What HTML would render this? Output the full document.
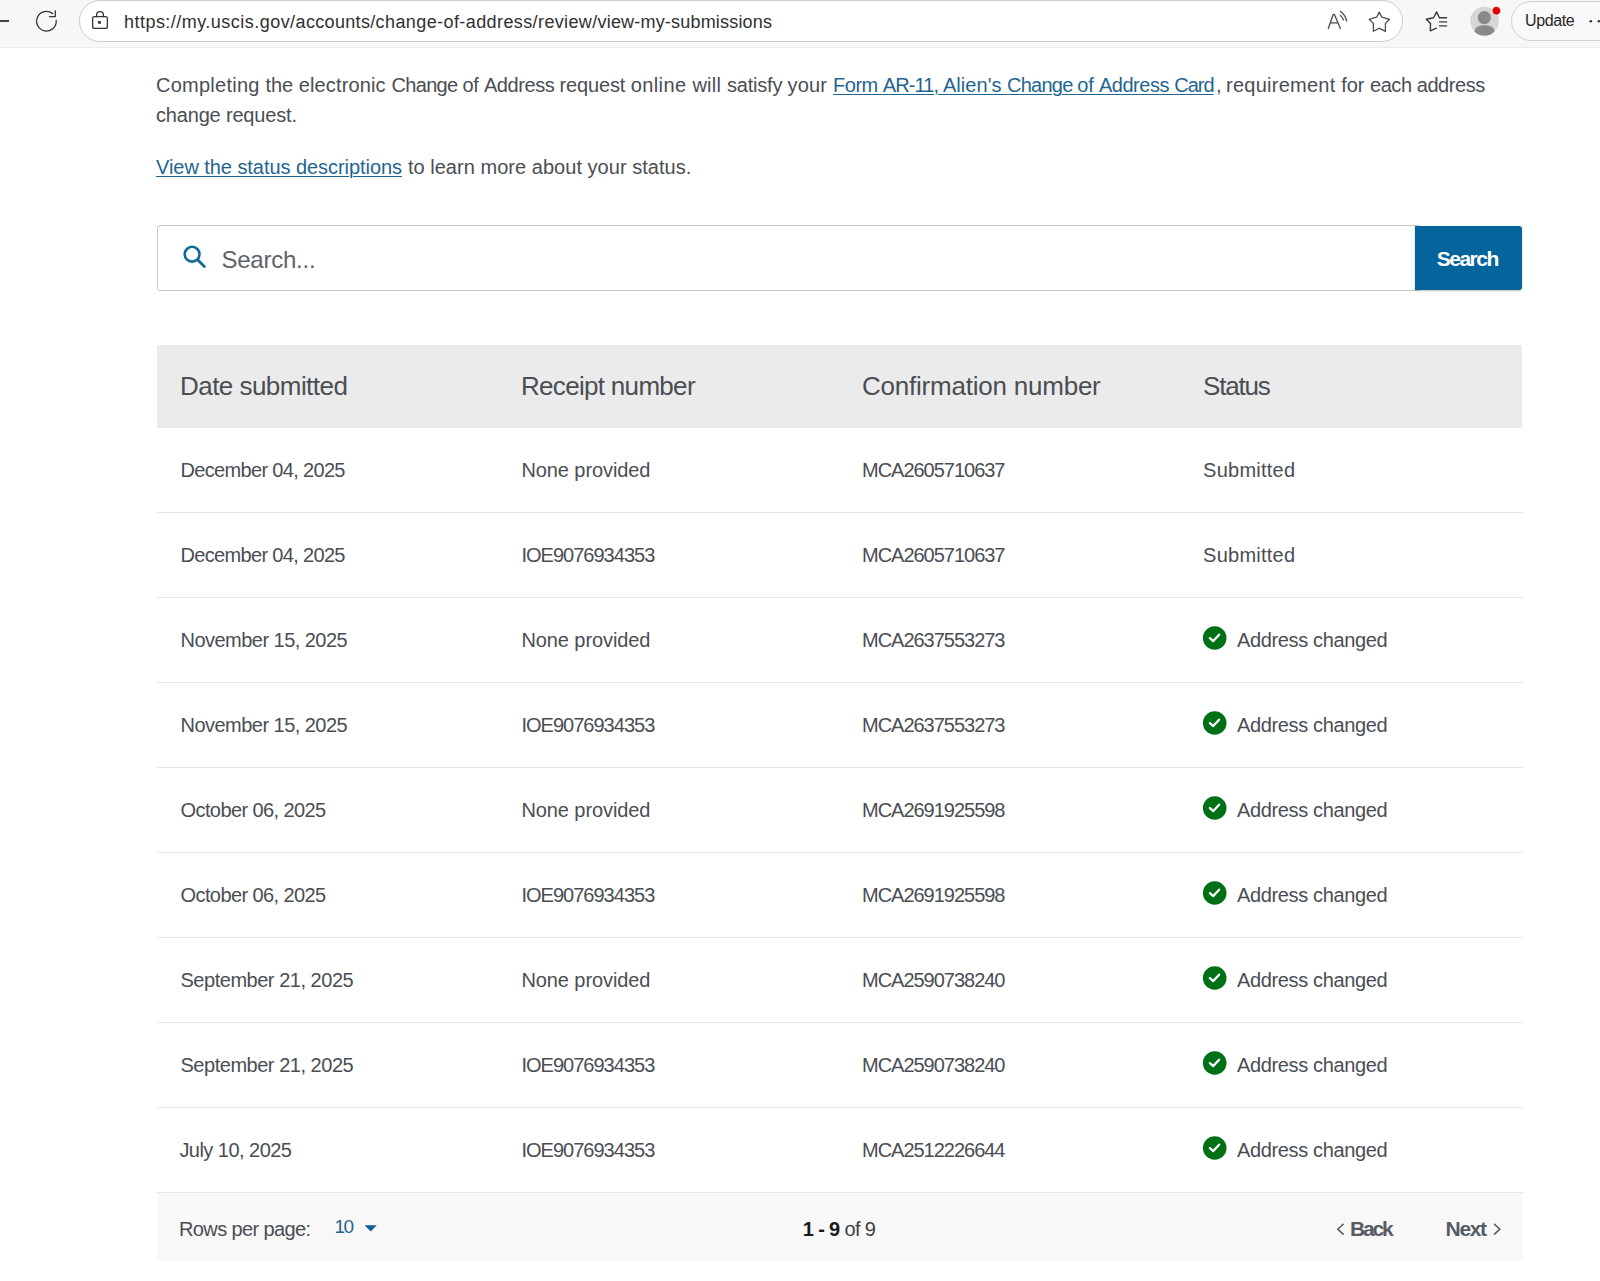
<!DOCTYPE html>
<html><head><meta charset="utf-8"><style>
html,body{margin:0;padding:0;width:1600px;height:1281px;overflow:hidden;background:#fff;}
body{position:relative;font-family:"Liberation Sans",sans-serif;}
.t{position:absolute;white-space:pre;}
.a{position:absolute;}
.u{text-decoration:underline;text-underline-offset:2px;text-decoration-thickness:1px;color:#1f6592;}
</style></head><body>
<div class="a" style="left:0;top:0;width:1600px;height:47px;background:#f7f7f7;border-bottom:1px solid #ebebeb;"></div>
<div class="a" style="left:79px;top:0px;width:1322px;height:40px;background:#fff;border:1px solid #cdcdcd;border-radius:21px;"></div>
<div class="a" style="left:0;top:20.4px;width:9px;height:1.2px;background:#444;"></div>
<div class="a" style="left:1511px;top:1px;width:120px;height:38px;border:1px solid #cfcfcf;border-radius:20px;background:#f9f9f9;"></div>
<svg class="a" style="left:0;top:0" width="1600" height="48" viewBox="0 0 1600 48">
 <g fill="none" stroke="#333" stroke-width="1.3" stroke-linecap="round" stroke-linejoin="round">
  <path d="M52.6 13.6 A9.8 9.8 0 1 0 56.2 20.4"/>
  <path d="M55.3 10.8 V16.6 H49.5"/>
  <rect x="92.6" y="16.6" width="14.8" height="11.8" rx="2"/>
  <path d="M96.6 16.6 V15 A3.4 3.4 0 0 1 103.4 15 V16.6"/>
 </g>
 <rect x="98" y="21" width="3" height="2.8" fill="#444"/>
 <g fill="none" stroke="#3a3a3a" stroke-width="1.2" stroke-linecap="round" stroke-linejoin="round">
  <path d="M1328.3 28.5 L1333.3 14.3 H1334.3 L1340.4 28.5 M1330.9 22.9 H1337.7" stroke="#4a4a4a" stroke-width="1.3"/>
  <path d="M1340.3 15.5 Q1342.6 17.2 1343.5 20" stroke="#555" stroke-width="1.3"/>
  <path d="M1340.4 11.4 Q1345.2 14.6 1346.6 21" stroke="#555" stroke-width="1.3"/>
  <path d="M1379.2 12.1 L1381.8 17.2 L1389.5 19.3 L1385.4 23.4 L1385.4 31.3 L1379.2 28.2 L1373.4 31.3 L1373.4 23.4 L1369.2 19.3 L1376.6 17.2 Z" stroke="#4d4d4d" stroke-width="1.3"/>
  <path d="M1439.4 17.8 L1436.6 11.9 L1433.6 17.7 L1426.3 19.3 L1430.5 23.6 L1430.3 30.8 L1436.4 28.2" stroke-width="1.4"/>
  <path d="M1439.6 17.8 H1446.6 M1439.6 21.9 H1446.6 M1439.6 25.9 H1446.6" stroke-width="1.4"/>
 </g>
 <circle cx="1484.5" cy="21" r="14.3" fill="#d6d6d6"/>
 <circle cx="1484.3" cy="17.6" r="6.6" fill="#8a8987"/>
 <path d="M1474.3 31.3 C1475.5 26.6 1479.5 25.3 1484.5 25.3 C1489.5 25.3 1493.5 26.6 1494.7 31.3 C1492.2 34.6 1488.5 35.7 1484.5 35.7 C1480.5 35.7 1476.8 34.6 1474.3 31.3 Z" fill="#8a8987"/>
 <circle cx="1496.4" cy="10.7" r="4.3" fill="#e00000" stroke="#f7f7f7" stroke-width="0.8"/>
 <circle cx="1590.8" cy="21.2" r="1.3" fill="#333"/>
 <circle cx="1598.8" cy="21.2" r="1.3" fill="#333"/>
</svg>
<div class="t" style="left:124.00px;top:13px;font-size:18px;line-height:18px;letter-spacing:0.469px;color:#303030;">https://my.uscis.gov/</div>
<div class="t" style="left:295.60px;top:13px;font-size:18px;line-height:18px;letter-spacing:0.326px;color:#303030;">accounts/</div>
<div class="t" style="left:375.60px;top:13px;font-size:18px;line-height:18px;letter-spacing:0.408px;color:#303030;">change-of-address/</div>
<div class="t" style="left:538.10px;top:13px;font-size:18px;line-height:18px;letter-spacing:0.338px;color:#303030;">review/</div>
<div class="t" style="left:597.50px;top:13px;font-size:18px;line-height:18px;letter-spacing:0.194px;color:#303030;">view-my-submissions</div>
<div class="t" style="left:1525.00px;top:13px;font-size:16px;line-height:16px;letter-spacing:-0.400px;color:#262626;">Update</div>
<div class="t" style="left:156.00px;top:75px;font-size:20px;line-height:20px;letter-spacing:0.253px;color:#4a4e54;">Completing </div>
<div class="t" style="left:265.50px;top:75px;font-size:20px;line-height:20px;letter-spacing:-0.044px;color:#4a4e54;">the </div>
<div class="t" style="left:298.70px;top:75px;font-size:20px;line-height:20px;letter-spacing:0.149px;color:#4a4e54;">electronic </div>
<div class="t" style="left:391.50px;top:75px;font-size:20px;line-height:20px;letter-spacing:-0.675px;color:#4a4e54;">Change </div>
<div class="t" style="left:462.40px;top:75px;font-size:20px;line-height:20px;letter-spacing:-0.250px;color:#4a4e54;">of </div>
<div class="t" style="left:483.90px;top:75px;font-size:20px;line-height:20px;letter-spacing:-0.417px;color:#4a4e54;">Address </div>
<div class="t" style="left:559.50px;top:75px;font-size:20px;line-height:20px;letter-spacing:-0.135px;color:#4a4e54;">request </div>
<div class="t" style="left:630.70px;top:75px;font-size:20px;line-height:20px;letter-spacing:0.395px;color:#4a4e54;">online </div>
<div class="t" style="left:692.40px;top:75px;font-size:20px;line-height:20px;letter-spacing:0.278px;color:#4a4e54;">will </div>
<div class="t" style="left:727.10px;top:75px;font-size:20px;line-height:20px;letter-spacing:-0.231px;color:#4a4e54;">satisfy </div>
<div class="t" style="left:787.50px;top:75px;font-size:20px;line-height:20px;letter-spacing:0.133px;color:#4a4e54;">your</div>
<div class="t" style="left:833.10px;top:75px;font-size:20px;line-height:20px;letter-spacing:-0.524px;color:#1f6592;"><span class="u">Form </span></div>
<div class="t" style="left:882.70px;top:75px;font-size:20px;line-height:20px;letter-spacing:-0.861px;color:#1f6592;"><span class="u">AR-11, </span></div>
<div class="t" style="left:943.00px;top:75px;font-size:20px;line-height:20px;letter-spacing:0.032px;color:#1f6592;"><span class="u">Alien&#x27;s </span></div>
<div class="t" style="left:1007.10px;top:75px;font-size:20px;line-height:20px;letter-spacing:-0.775px;color:#1f6592;"><span class="u">Change </span></div>
<div class="t" style="left:1077.30px;top:75px;font-size:20px;line-height:20px;letter-spacing:-0.217px;color:#1f6592;"><span class="u">of </span></div>
<div class="t" style="left:1098.90px;top:75px;font-size:20px;line-height:20px;letter-spacing:-0.455px;color:#1f6592;"><span class="u">Address </span></div>
<div class="t" style="left:1174.20px;top:75px;font-size:20px;line-height:20px;letter-spacing:-1.000px;color:#1f6592;"><span class="u">Card</span></div>
<div class="t" style="left:1216.00px;top:75px;font-size:20px;line-height:20px;letter-spacing:-0.513px;color:#4a4e54;">, </div>
<div class="t" style="left:1226.10px;top:75px;font-size:20px;line-height:20px;letter-spacing:0.243px;color:#4a4e54;">requirement </div>
<div class="t" style="left:1341.30px;top:75px;font-size:20px;line-height:20px;letter-spacing:-0.052px;color:#4a4e54;">for </div>
<div class="t" style="left:1370.00px;top:75px;font-size:20px;line-height:20px;letter-spacing:-0.447px;color:#4a4e54;">each </div>
<div class="t" style="left:1416.70px;top:75px;font-size:20px;line-height:20px;letter-spacing:-0.417px;color:#4a4e54;">address</div>
<div class="t" style="left:156.00px;top:105px;font-size:20px;line-height:20px;letter-spacing:-0.179px;color:#4a4e54;">change request.</div>
<div class="t" style="left:156.00px;top:157px;font-size:20px;line-height:20px;letter-spacing:-0.056px;color:#1f6592;"><span class="u">View the status descriptions</span></div>
<div class="t" style="left:407.90px;top:157px;font-size:20px;line-height:20px;letter-spacing:0.035px;color:#4a4e54;">to learn more about your status.</div>
<div class="a" style="left:157px;top:225px;width:1262px;height:64px;border:1px solid #c9c9c9;border-radius:3px;background:#fff;"></div>
<svg class="a" style="left:180px;top:242px" width="30" height="30" viewBox="0 0 30 30">
 <circle cx="12.1" cy="12.2" r="7.4" fill="none" stroke="#0f6a99" stroke-width="2.6"/>
 <path d="M17.6 17.8 L24.4 24.6" stroke="#0f6a99" stroke-width="2.8" stroke-linecap="round"/>
</svg>
<div class="t" style="left:221.50px;top:248px;font-size:24px;line-height:24px;letter-spacing:-0.250px;color:#5f6368;">Search...</div>
<div class="a" style="left:1415px;top:226px;width:107px;height:64px;background:#05649c;border-radius:0 3px 3px 0;box-shadow:0 1px 2px rgba(0,0,0,.25);"></div>
<div class="t" style="left:1436.70px;top:248px;font-size:21px;line-height:21px;letter-spacing:-1.480px;color:#ffffff;font-weight:bold;">Search</div>
<div class="a" style="left:157px;top:345px;width:1365px;height:83px;background:#ebebeb;"></div>
<div class="t" style="left:180.00px;top:373px;font-size:26px;line-height:26px;letter-spacing:-0.538px;color:#4a4e54;">Date submitted</div>
<div class="t" style="left:521.00px;top:373px;font-size:26px;line-height:26px;letter-spacing:-0.692px;color:#4a4e54;">Receipt number</div>
<div class="t" style="left:862.00px;top:373px;font-size:26px;line-height:26px;letter-spacing:-0.222px;color:#4a4e54;">Confirmation number</div>
<div class="t" style="left:1203.00px;top:373px;font-size:26px;line-height:26px;letter-spacing:-1.200px;color:#4a4e54;">Status</div>
<div class="a" style="left:157px;top:512px;width:1366px;height:1px;background:#e6e6e6;"></div>
<div class="t" style="left:180.50px;top:460px;font-size:20px;line-height:20px;letter-spacing:-0.669px;color:#4a4e54;">December 04, 2025</div>
<div class="t" style="left:521.40px;top:460px;font-size:20px;line-height:20px;letter-spacing:-0.083px;color:#4a4e54;">None provided</div>
<div class="t" style="left:862.00px;top:460px;font-size:20px;line-height:20px;letter-spacing:-1.017px;color:#4a4e54;">MCA2605710637</div>
<div class="t" style="left:1203.10px;top:460px;font-size:20px;line-height:20px;letter-spacing:0.238px;color:#4a4e54;">Submitted</div>
<div class="a" style="left:157px;top:597px;width:1366px;height:1px;background:#e6e6e6;"></div>
<div class="t" style="left:180.50px;top:545px;font-size:20px;line-height:20px;letter-spacing:-0.669px;color:#4a4e54;">December 04, 2025</div>
<div class="t" style="left:521.40px;top:545px;font-size:20px;line-height:20px;letter-spacing:-0.983px;color:#4a4e54;">IOE9076934353</div>
<div class="t" style="left:862.00px;top:545px;font-size:20px;line-height:20px;letter-spacing:-1.017px;color:#4a4e54;">MCA2605710637</div>
<div class="t" style="left:1203.10px;top:545px;font-size:20px;line-height:20px;letter-spacing:0.238px;color:#4a4e54;">Submitted</div>
<div class="a" style="left:157px;top:682px;width:1366px;height:1px;background:#e6e6e6;"></div>
<div class="t" style="left:180.50px;top:630px;font-size:20px;line-height:20px;letter-spacing:-0.531px;color:#4a4e54;">November 15, 2025</div>
<div class="t" style="left:521.40px;top:630px;font-size:20px;line-height:20px;letter-spacing:-0.083px;color:#4a4e54;">None provided</div>
<div class="t" style="left:862.00px;top:630px;font-size:20px;line-height:20px;letter-spacing:-1.017px;color:#4a4e54;">MCA2637553273</div>
<svg class="a" style="left:1200px;top:623.1px" width="30" height="30" viewBox="0 0 30 30">
 <circle cx="14.7" cy="15" r="11.8" fill="#007016"/>
 <path d="M9.9 15.1 L13.3 18.1 L19.1 11.7" fill="none" stroke="#fff" stroke-width="2.3" stroke-linecap="round" stroke-linejoin="round"/>
</svg>
<div class="t" style="left:1237.00px;top:630px;font-size:20px;line-height:20px;letter-spacing:-0.357px;color:#4a4e54;">Address changed</div>
<div class="a" style="left:157px;top:767px;width:1366px;height:1px;background:#e6e6e6;"></div>
<div class="t" style="left:180.50px;top:715px;font-size:20px;line-height:20px;letter-spacing:-0.531px;color:#4a4e54;">November 15, 2025</div>
<div class="t" style="left:521.40px;top:715px;font-size:20px;line-height:20px;letter-spacing:-0.983px;color:#4a4e54;">IOE9076934353</div>
<div class="t" style="left:862.00px;top:715px;font-size:20px;line-height:20px;letter-spacing:-1.017px;color:#4a4e54;">MCA2637553273</div>
<svg class="a" style="left:1200px;top:708.1px" width="30" height="30" viewBox="0 0 30 30">
 <circle cx="14.7" cy="15" r="11.8" fill="#007016"/>
 <path d="M9.9 15.1 L13.3 18.1 L19.1 11.7" fill="none" stroke="#fff" stroke-width="2.3" stroke-linecap="round" stroke-linejoin="round"/>
</svg>
<div class="t" style="left:1237.00px;top:715px;font-size:20px;line-height:20px;letter-spacing:-0.357px;color:#4a4e54;">Address changed</div>
<div class="a" style="left:157px;top:852px;width:1366px;height:1px;background:#e6e6e6;"></div>
<div class="t" style="left:180.50px;top:800px;font-size:20px;line-height:20px;letter-spacing:-0.587px;color:#4a4e54;">October 06, 2025</div>
<div class="t" style="left:521.40px;top:800px;font-size:20px;line-height:20px;letter-spacing:-0.083px;color:#4a4e54;">None provided</div>
<div class="t" style="left:862.00px;top:800px;font-size:20px;line-height:20px;letter-spacing:-1.017px;color:#4a4e54;">MCA2691925598</div>
<svg class="a" style="left:1200px;top:793.1px" width="30" height="30" viewBox="0 0 30 30">
 <circle cx="14.7" cy="15" r="11.8" fill="#007016"/>
 <path d="M9.9 15.1 L13.3 18.1 L19.1 11.7" fill="none" stroke="#fff" stroke-width="2.3" stroke-linecap="round" stroke-linejoin="round"/>
</svg>
<div class="t" style="left:1237.00px;top:800px;font-size:20px;line-height:20px;letter-spacing:-0.357px;color:#4a4e54;">Address changed</div>
<div class="a" style="left:157px;top:937px;width:1366px;height:1px;background:#e6e6e6;"></div>
<div class="t" style="left:180.50px;top:885px;font-size:20px;line-height:20px;letter-spacing:-0.587px;color:#4a4e54;">October 06, 2025</div>
<div class="t" style="left:521.40px;top:885px;font-size:20px;line-height:20px;letter-spacing:-0.983px;color:#4a4e54;">IOE9076934353</div>
<div class="t" style="left:862.00px;top:885px;font-size:20px;line-height:20px;letter-spacing:-1.017px;color:#4a4e54;">MCA2691925598</div>
<svg class="a" style="left:1200px;top:878.1px" width="30" height="30" viewBox="0 0 30 30">
 <circle cx="14.7" cy="15" r="11.8" fill="#007016"/>
 <path d="M9.9 15.1 L13.3 18.1 L19.1 11.7" fill="none" stroke="#fff" stroke-width="2.3" stroke-linecap="round" stroke-linejoin="round"/>
</svg>
<div class="t" style="left:1237.00px;top:885px;font-size:20px;line-height:20px;letter-spacing:-0.357px;color:#4a4e54;">Address changed</div>
<div class="a" style="left:157px;top:1022px;width:1366px;height:1px;background:#e6e6e6;"></div>
<div class="t" style="left:180.50px;top:970px;font-size:20px;line-height:20px;letter-spacing:-0.476px;color:#4a4e54;">September 21, 2025</div>
<div class="t" style="left:521.40px;top:970px;font-size:20px;line-height:20px;letter-spacing:-0.083px;color:#4a4e54;">None provided</div>
<div class="t" style="left:862.00px;top:970px;font-size:20px;line-height:20px;letter-spacing:-1.017px;color:#4a4e54;">MCA2590738240</div>
<svg class="a" style="left:1200px;top:963.1px" width="30" height="30" viewBox="0 0 30 30">
 <circle cx="14.7" cy="15" r="11.8" fill="#007016"/>
 <path d="M9.9 15.1 L13.3 18.1 L19.1 11.7" fill="none" stroke="#fff" stroke-width="2.3" stroke-linecap="round" stroke-linejoin="round"/>
</svg>
<div class="t" style="left:1237.00px;top:970px;font-size:20px;line-height:20px;letter-spacing:-0.357px;color:#4a4e54;">Address changed</div>
<div class="a" style="left:157px;top:1107px;width:1366px;height:1px;background:#e6e6e6;"></div>
<div class="t" style="left:180.50px;top:1055px;font-size:20px;line-height:20px;letter-spacing:-0.476px;color:#4a4e54;">September 21, 2025</div>
<div class="t" style="left:521.40px;top:1055px;font-size:20px;line-height:20px;letter-spacing:-0.983px;color:#4a4e54;">IOE9076934353</div>
<div class="t" style="left:862.00px;top:1055px;font-size:20px;line-height:20px;letter-spacing:-1.017px;color:#4a4e54;">MCA2590738240</div>
<svg class="a" style="left:1200px;top:1048.1px" width="30" height="30" viewBox="0 0 30 30">
 <circle cx="14.7" cy="15" r="11.8" fill="#007016"/>
 <path d="M9.9 15.1 L13.3 18.1 L19.1 11.7" fill="none" stroke="#fff" stroke-width="2.3" stroke-linecap="round" stroke-linejoin="round"/>
</svg>
<div class="t" style="left:1237.00px;top:1055px;font-size:20px;line-height:20px;letter-spacing:-0.357px;color:#4a4e54;">Address changed</div>
<div class="a" style="left:157px;top:1192px;width:1366px;height:1px;background:#e6e6e6;"></div>
<div class="t" style="left:179.40px;top:1140px;font-size:20px;line-height:20px;letter-spacing:-0.533px;color:#4a4e54;">July 10, 2025</div>
<div class="t" style="left:521.40px;top:1140px;font-size:20px;line-height:20px;letter-spacing:-0.983px;color:#4a4e54;">IOE9076934353</div>
<div class="t" style="left:862.00px;top:1140px;font-size:20px;line-height:20px;letter-spacing:-1.017px;color:#4a4e54;">MCA2512226644</div>
<svg class="a" style="left:1200px;top:1133.1px" width="30" height="30" viewBox="0 0 30 30">
 <circle cx="14.7" cy="15" r="11.8" fill="#007016"/>
 <path d="M9.9 15.1 L13.3 18.1 L19.1 11.7" fill="none" stroke="#fff" stroke-width="2.3" stroke-linecap="round" stroke-linejoin="round"/>
</svg>
<div class="t" style="left:1237.00px;top:1140px;font-size:20px;line-height:20px;letter-spacing:-0.357px;color:#4a4e54;">Address changed</div>
<div class="a" style="left:157px;top:1193px;width:1366px;height:68px;background:#f8f8f8;"></div>
<div class="t" style="left:179.00px;top:1219px;font-size:20px;line-height:20px;letter-spacing:-0.615px;color:#4a4e54;">Rows per page:</div>
<div class="t" style="left:334.40px;top:1217px;font-size:19px;line-height:19px;letter-spacing:-1.500px;color:#1f6592;">10</div>
<svg class="a" style="left:360px;top:1220px" width="20" height="16" viewBox="0 0 20 16"><path d="M4.6 5.2 H16.8 L10.7 11.6 Z" fill="#0d5f93"/></svg>
<div class="t" style="left:802.80px;top:1219px;font-size:20px;line-height:20px;letter-spacing:-0.644px;color:#1b1b1b;"><b>1 - 9</b> <span style="color:#3d4045">of 9</span></div>
<svg class="a" style="left:1330px;top:1215px" width="180" height="30" viewBox="0 0 180 30">
 <path d="M13.6 8.8 L7.8 14.2 L13.6 19.6" fill="none" stroke="#5c6166" stroke-width="1.6"/>
 <path d="M164 8.8 L169.8 14.2 L164 19.6" fill="none" stroke="#5c6166" stroke-width="1.6"/>
</svg>
<div class="t" style="left:1350.00px;top:1218px;font-size:21px;line-height:21px;letter-spacing:-2.200px;color:#565c65;font-weight:bold;">Back</div>
<div class="t" style="left:1445.60px;top:1218px;font-size:21px;line-height:21px;letter-spacing:-1.367px;color:#565c65;font-weight:bold;">Next</div>
</body></html>
